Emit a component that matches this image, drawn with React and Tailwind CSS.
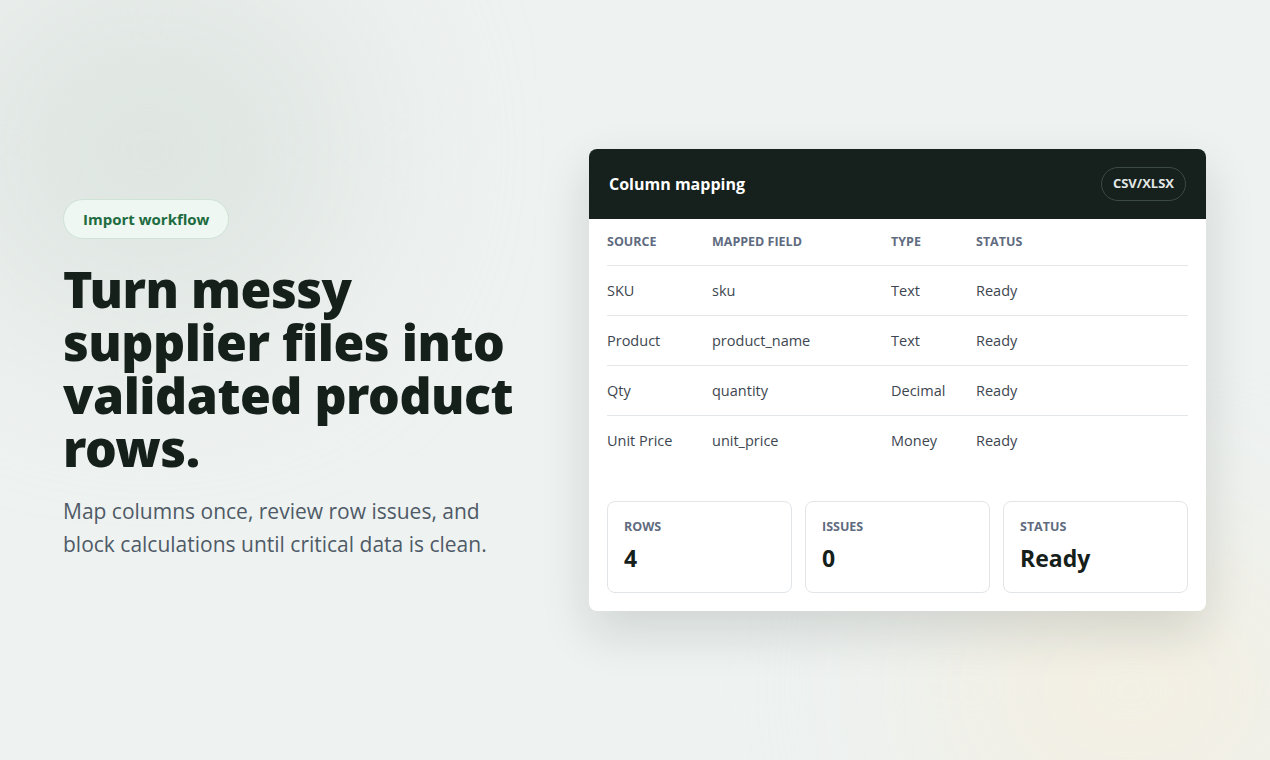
const rows = [
  ['SKU', 'sku', 'Text', 'Ready'],
  ['Product', 'product_name', 'Text', 'Ready'],
  ['Qty', 'quantity', 'Decimal', 'Ready'],
  ['Unit Price', 'unit_price', 'Money', 'Ready'],
];

const stats = [
  ['ROWS', '4'],
  ['ISSUES', '0'],
  ['STATUS', 'Ready'],
];

export default function App() {
  return (
    <div
      className="relative h-[760px] w-[1270px] overflow-hidden bg-[#eef2f1]"
      style={{ fontFamily: '"Open Sans", "Noto Sans", sans-serif' }}
    >
      <div className="pointer-events-none absolute left-[-60px] top-[-40px] h-[380px] w-[420px] rounded-full bg-[#dfe6e2] blur-[80px]" />
      <div className="pointer-events-none absolute bottom-[-80px] right-[-60px] h-[300px] w-[400px] rounded-full bg-[#f3efe2] blur-[90px]" />
      <div className="relative flex h-full items-center gap-[66px] pl-[63px]">
        <div className="w-[460px]">
          <span className="inline-flex h-[40px] items-center rounded-full border border-[#cfe3d6] bg-[#eef7f1] px-[19px] text-[15px] font-bold text-[#1d6b3f]">
            Import workflow
          </span>
          <h1 className="mt-[24px] text-[50px] font-black leading-[53px] tracking-[-0.5px] text-[#15201b]" style={{ fontFamily: '"Noto Sans", sans-serif' }}>
            Turn messy supplier files into validated product rows.
          </h1>
          <p className="mt-[20px] text-[21px] leading-[33px] text-[#4f5a66]">
            Map columns once, review row issues, and block calculations until critical data is clean.
          </p>
        </div>
        <div className="w-[617px] overflow-hidden rounded-[8px] bg-white shadow-[0_20px_50px_rgba(20,35,30,0.14)]">
          <div className="flex h-[70px] items-center justify-between bg-[#16201c] px-[20px]">
            <span className="text-[16px] font-bold text-white">Column mapping</span>
            <span className="rounded-full border border-[#3b4a44] px-[11px] py-[6px] text-[13px] font-bold text-[#e3e8e6]">CSV/XLSX</span>
          </div>
          <div className="px-[18px]">
            <div className="grid h-[47px] grid-cols-[105px_179px_85px_1fr] items-center border-b border-[#e4e7ea] text-[12.5px] font-bold text-[#5f6b80]">
              <span>SOURCE</span><span>MAPPED FIELD</span><span>TYPE</span><span>STATUS</span>
            </div>
            {rows.map((r, i) => (
              <div
                key={r[0]}
                className={`grid h-[50px] grid-cols-[105px_179px_85px_1fr] items-center text-[14.5px] text-[#3d4650] ${i < rows.length - 1 ? 'border-b border-[#e4e7ea]' : ''}`}
              >
                {r.map((c, j) => <span key={j}>{c}</span>)}
              </div>
            ))}
            <div className="mt-[35px] mb-[18px] grid grid-cols-3 gap-[13px]">
              {stats.map(([k, v]) => (
                <div key={k} className="h-[92px] rounded-[8px] border border-[#e1e5e8] px-[16px] pt-[16px]">
                  <div className="text-[12.5px] font-bold text-[#5f6b80]">{k}</div>
                  <div className="mt-[4px] text-[23px] font-bold text-[#15201b]">{v}</div>
                </div>
              ))}
            </div>
          </div>
        </div>
      </div>
    </div>
  );
}
